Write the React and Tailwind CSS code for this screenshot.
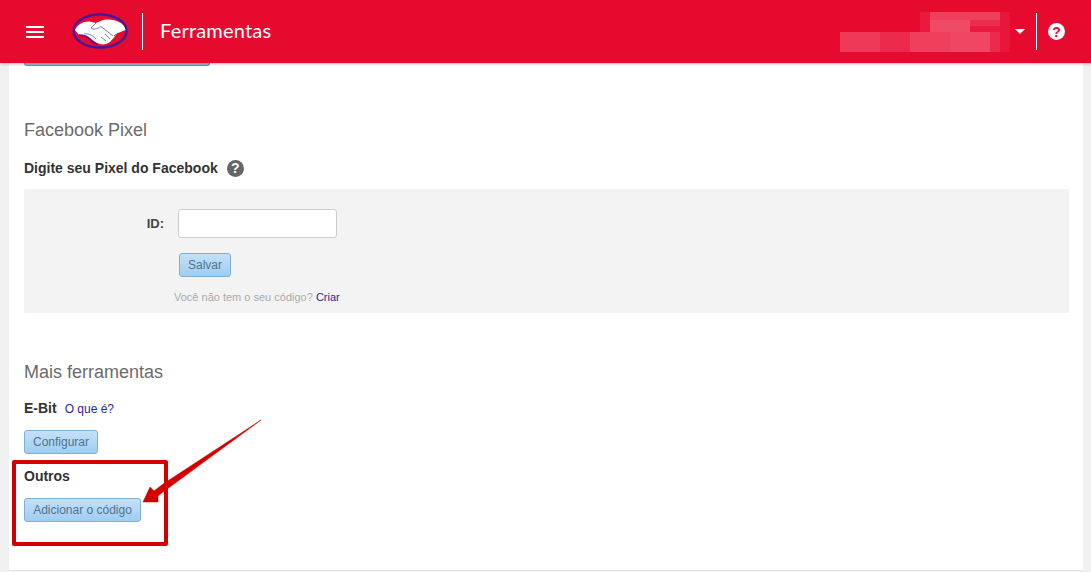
import React from 'react'

const btn = 'h-[24px] rounded-[3px] border border-[#7eb0d6] bg-gradient-to-b from-[#c4e1f8] to-[#9fcdf0] text-[12px] leading-none text-[#4f7390]'

function Logo() {
  return (
    <svg width="56" height="36" viewBox="0 0 56 36">
      <ellipse cx="28" cy="18" rx="26.5" ry="16.5" fill="#e60a2e" stroke="#45189a" strokeWidth="2.4" />
      <path d="M3 17 C6 11 11 8 18 8.5 L24 10 L31 7 C37 6 44 7 48 9.5 C51 11 53 14 53.5 17 L46 20 L38 29 C34 32 29 32 25 30 L16 24 L7 22 Z" fill="#fff" />
      <path d="M24 10 L19 15 C21 17 25 16 29 13.5 L41 23 M33 21 L38 26 M29 24 L34 28" fill="none" stroke="#7a6ab0" strokeWidth="0.9" />
      <path d="M46 20 L42 23" fill="none" stroke="#e60a2e" strokeWidth="1" />
      <path d="M7 22 C12 22 15 23 18 26 C20 29 23 31 26 31.5" fill="none" stroke="#45189a" strokeWidth="1.4" />
      <path d="M12 21 C16 20 20 22 24 26" fill="none" stroke="#7a6ab0" strokeWidth="0.9" />
    </svg>
  )
}

// pixelated account name
function Mosaic() {
  const blocks = [
    [80, 0, 90, 20, '#e91a3e'], [90, 0, 70, 8, '#ee3f5c'], [90, 8, 40, 12, '#ef4a66'], [130, 8, 30, 6, '#eb2c4d'],
    [0, 20, 170, 20, '#ec2a4c'], [0, 20, 40, 20, '#ee3a58'], [70, 20, 40, 20, '#ef3f5d'], [110, 20, 40, 20, '#f04663'],
    [160, 0, 10, 40, '#e8163b'],
  ]
  return (
    <svg width="170" height="40" viewBox="0 0 170 40">
      {blocks.map((b, i) => (
        <rect key={i} x={b[0]} y={b[1]} width={b[2]} height={b[3]} fill={b[4]} />
      ))}
    </svg>
  )
}

function Header() {
  return (
    <header className="relative z-10 flex h-[63px] items-center bg-[#e60a2e] text-white shadow-[0_1px_3px_rgba(0,0,0,0.25)]">
      <div className="ml-[26px] flex w-[18px] flex-col gap-[3px]">
        <span className="h-[2px] bg-white"></span>
        <span className="h-[2px] bg-white"></span>
        <span className="h-[2px] bg-white"></span>
      </div>
      <div className="ml-[28px] mb-[1px]"><Logo /></div>
      <div className="ml-[14px] h-[37px] w-px bg-white"></div>
      <span className="mb-[3px] ml-[17px] font-['Lato',sans-serif] text-[20px] tracking-[0.2px]">Ferramentas</span>
      <div className="ml-auto flex items-center">
        <div className="mt-[1px]"><Mosaic /></div>
        <span className="ml-[5px] h-0 w-0 border-x-[5px] border-t-[5px] border-x-transparent border-t-white"></span>
        <div className="ml-[11px] h-[37px] w-px bg-white"></div>
        <span className="ml-[11px] mr-[26px] flex h-[17px] w-[17px] items-center justify-center rounded-full bg-white font-['Liberation_Sans',sans-serif] text-[14px] font-bold leading-none text-[#e60a2e]">?</span>
      </div>
    </header>
  )
}

function App() {
  return (
    <div className="relative h-[572px] w-[1091px] overflow-hidden bg-[#f0f0f0] font-['Liberation_Sans',sans-serif]">
      <Header />
      <main className="ml-[9px] mr-[8px] h-[508px] border-b border-[#e4e4e4] bg-white pl-[15px] pr-[14px]">
        <div className="h-[3px] w-[186px] rounded-b-[3px] border border-t-0 border-[#6f96b8] bg-[#93b6d6]"></div>

        <h2 className="mt-[54px] text-[18px] leading-[20px] text-[#6b6b6b]">Facebook Pixel</h2>
        <div className="mt-[18px] flex items-center">
          <h3 className="text-[14px] font-bold leading-[20px] text-[#333]">Digite seu Pixel do Facebook</h3>
          <span className="ml-[9px] flex h-[17px] w-[17px] items-center justify-center rounded-full bg-[#666] text-[14px] font-bold leading-none text-white">?</span>
        </div>

        <section className="mt-[11px] h-[124px] rounded-[2px] bg-[#f3f3f3] pt-[20px]">
          <div className="flex items-center">
            <label className="w-[140px] text-right text-[13px] font-bold text-[#444]">ID:</label>
            <input className="ml-[14px] h-[29px] w-[159px] rounded-[3px] border border-[#ccc] bg-white" />
          </div>
          <button className={`${btn} ml-[155px] mt-[15px] w-[52px]`}>Salvar</button>
          <p className="ml-[150px] mt-[14px] text-[11px] leading-[12px] text-[#aaa]">
            Você não tem o seu código? <a className="text-[#2a1fa0]">Criar</a>
          </p>
        </section>

        <h2 className="mt-[49px] text-[18px] leading-[20px] text-[#6b6b6b]">Mais ferramentas</h2>
        <div className="mt-[16px] flex items-baseline">
          <h3 className="text-[14px] font-bold leading-[20px] text-[#333]">E-Bit</h3>
          <a className="ml-[8px] text-[12px] text-[#2a1fa0]">O que é?</a>
        </div>
        <button className={`${btn} mt-[12px] block w-[74px]`}>Configurar</button>
        <h3 className="mt-[12px] text-[14px] font-bold leading-[20px] text-[#333]">Outros</h3>
        <button className={`${btn} mt-[12px] block w-[117px]`}>Adicionar o código</button>
      </main>

      {/* annotation over the page */}
      <div className="absolute left-[12px] top-[460px] h-[86px] w-[156px] rounded-[2px] border-[4px] border-[#d40000]"></div>
      <svg className="absolute left-0 top-0" width="1091" height="572" viewBox="0 0 1091 572">
        <path d="M261 420 L163 484 L154 491 L150 487 L143 502 L158 502 L158 496 L163 492 Z" fill="#d40000" stroke="#d40000" strokeWidth="0.5" strokeLinejoin="round" />
      </svg>
    </div>
  )
}

export default App
